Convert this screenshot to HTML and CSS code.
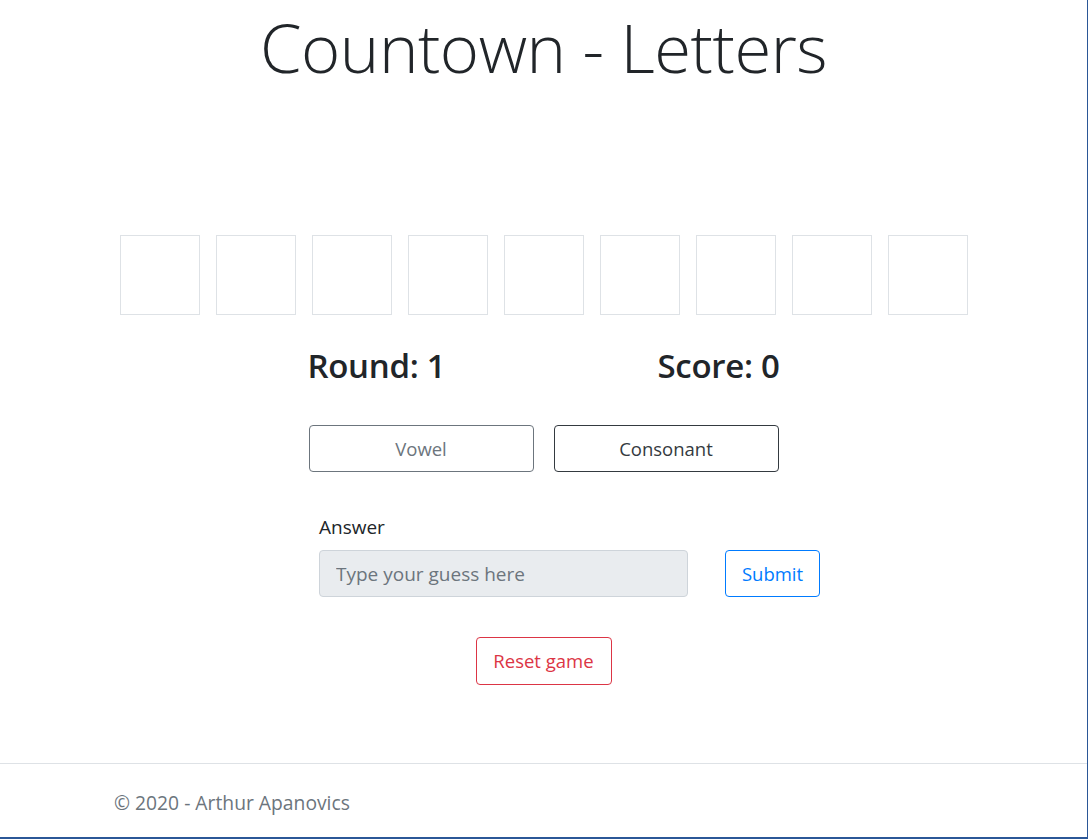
FILE: index.html
```html
<!DOCTYPE html>
<html lang="en">
<head>
<meta charset="utf-8">
<title>Countown - Letters</title>
<link rel="stylesheet" href="styles.css">
</head>
<body>
<div class="frame">
  <main class="main">
    <h1 class="title">Countown - Letters</h1>
    <div class="tiles">
      <div class="tile"></div><div class="tile"></div><div class="tile"></div>
      <div class="tile"></div><div class="tile"></div><div class="tile"></div>
      <div class="tile"></div><div class="tile"></div><div class="tile"></div>
    </div>
    <div class="stats">
      <h2 class="stat">Round: 1</h2>
      <h2 class="stat">Score: 0</h2>
    </div>
    <div class="choices">
      <button class="btn btn-lg btn-secondary-outline">Vowel</button>
      <button class="btn btn-lg btn-dark-outline">Consonant</button>
    </div>
    <form class="answer-form">
      <label class="label" for="guess">Answer</label>
      <div class="answer-row">
        <input id="guess" class="input" type="text" placeholder="Type your guess here" disabled>
        <button type="button" class="btn btn-lg btn-primary-outline">Submit</button>
      </div>
    </form>
    <div class="reset-row">
      <button class="btn btn-lg btn-danger-outline">Reset game</button>
    </div>
  </main>
  <footer class="footer">
    <div class="footer-text">© 2020 - Arthur Apanovics</div>
  </footer>
</div>
</body>
</html>
```
FILE: styles.css
```css
* { box-sizing: border-box; }
html, body { margin: 0; padding: 0; }
body {
  font-family: "Open Sans", "Noto Sans", sans-serif;
  color: #212529;
  background: #fff;
}
.frame {
  height: 839px;
  border-right: 1px solid #2b5797;
  border-bottom: 2px solid #2b5797;
  display: flex;
  flex-direction: column;
}
.main {
  flex: 1;
  display: flex;
  flex-direction: column;
  align-items: center;
}
.title {
  margin: 0;
  font-weight: 300;
  font-size: 67px;
  line-height: 94px;
  letter-spacing: -0.5px;
  color: #212529;
}
.tiles {
  margin-top: 141px;
  display: flex;
  gap: 16px;
}
.tile {
  width: 80px;
  height: 80px;
  border: 1px solid #dee2e6;
}
.stats {
  margin-top: 28px;
  width: 472px;
  display: flex;
  justify-content: space-between;
}
.stat {
  margin: 0;
  font-size: 33px;
  font-weight: 600;
  line-height: 46px;
  letter-spacing: -0.3px;
}
.choices {
  margin-top: 36px;
  display: flex;
  gap: 20px;
}
.btn {
  background: transparent;
  font-family: inherit;
  border-radius: 4px;
  border: 1px solid;
  cursor: pointer;
}
.btn-lg {
  font-size: 18.5px;
  line-height: 28px;
  padding: 8px 16px;
  height: 47px;
}
.choices .btn { width: 225px; }
.btn-secondary-outline { color: #6c757d; border-color: #6c757d; }
.btn-dark-outline { color: #343a40; border-color: #343a40; }
.btn-primary-outline { color: #007bff; border-color: #007bff; width: 95px; padding: 8px 0; }
.btn-danger-outline { color: #dc3545; border-color: #dc3545; width: 136px; height: 48px; padding: 8px 0; }
.answer-form {
  margin-top: 43px;
  width: 501px;
  margin-left: 52px;
}
.label {
  display: block;
  font-size: 19px;
  line-height: 24px;
  margin-bottom: 11px;
}
.answer-row {
  display: flex;
  gap: 37px;
}
.input {
  width: 369px;
  height: 47px;
  font-family: inherit;
  font-size: 19px;
  padding: 6px 16px;
  border: 1px solid #ced4da;
  border-radius: 4px;
  background: #e9ecef;
  color: #495057;
}
.input::placeholder { color: #6c757d; opacity: 1; }
.reset-row {
  margin-top: 40px;
}
.footer {
  border-top: 1px solid #dee2e6;
  height: 74px;
  padding-left: 114px;
  padding-top: 27px;
}
.footer-text {
  font-size: 19.3px;
  line-height: 24px;
  color: #6c757d;
}
```
